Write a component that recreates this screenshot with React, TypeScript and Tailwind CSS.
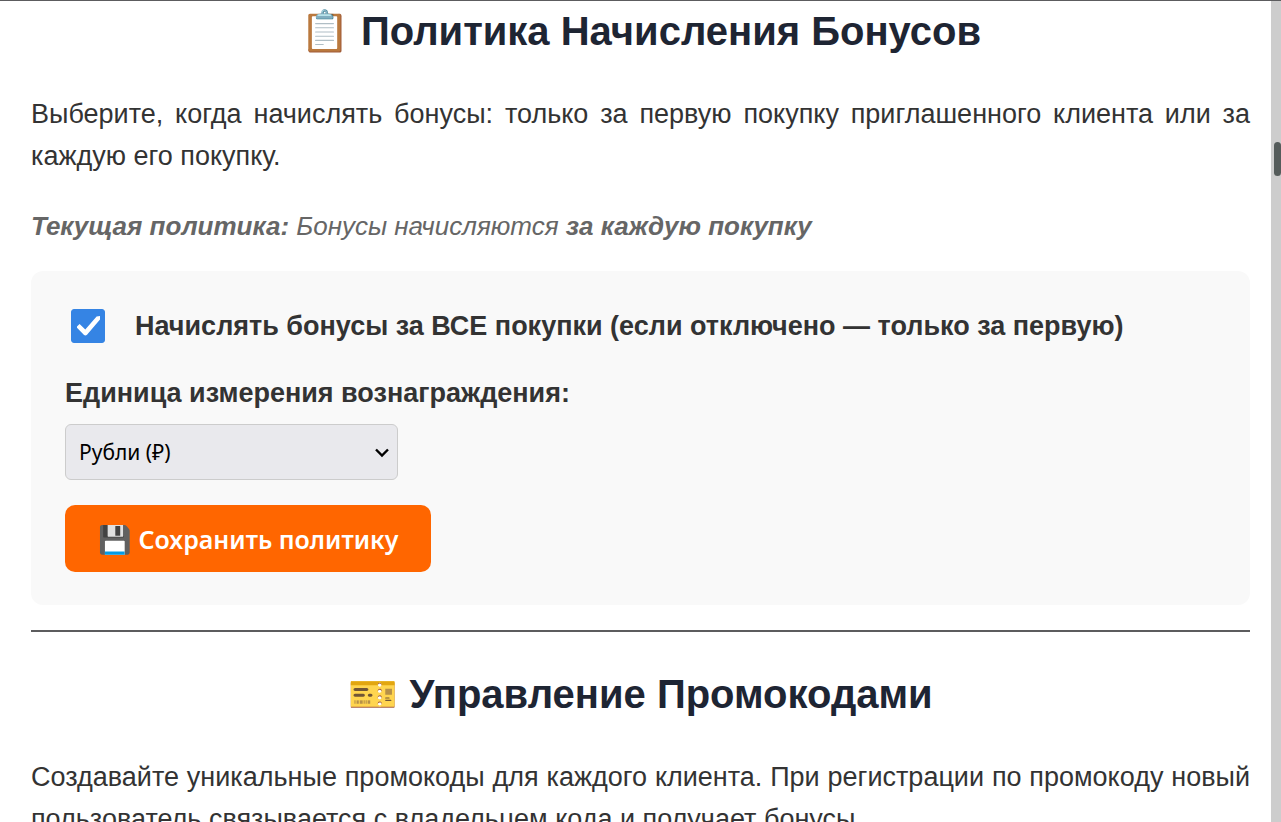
import React, { useState } from 'react';

interface SectionTitleProps {
  icon: string;
  children: React.ReactNode;
}

const SectionTitle: React.FC<SectionTitleProps> = ({ icon, children }) => (
  <h2 className="text-center text-[40px] leading-[60px] font-bold text-[#1e2533]">
    {icon} {children}
  </h2>
);

const App: React.FC = () => {
  const [allPurchases, setAllPurchases] = useState(true);
  const [unit, setUnit] = useState('rub');

  return (
    <div className="flex h-screen overflow-hidden border-t border-[#5c5c5e] bg-white font-['Liberation_Sans',Arial,sans-serif] text-[27px] leading-[42px] text-[#333333]">
      <main className="min-w-0 flex-1 pr-[21px] pl-[31px]">
        {/* Bonus policy */}
        <section>
          <SectionTitle icon="📋">Политика Начисления Бонусов</SectionTitle>
          <p className="mt-8 text-justify">
            Выберите, когда начислять бонусы: только за первую покупку приглашенного клиента или за
            каждую его покупку.
          </p>
          <p className="mt-7 text-[26px] text-[#666666] italic">
            <strong>Текущая политика:</strong> Бонусы начисляются <strong>за каждую покупку</strong>
          </p>

          <form
            className="mt-6 rounded-xl bg-[#f9f9f9] p-[34px] pb-[33px]"
            onSubmit={(e) => e.preventDefault()}
          >
            <label className="flex items-center gap-[30px] pl-1.5 font-bold">
              <span className="relative flex shrink-0">
                <input
                  type="checkbox"
                  checked={allPurchases}
                  onChange={(e) => setAllPurchases(e.target.checked)}
                  className="peer size-[34px] appearance-none rounded-[3px] border border-[#8f8f9d] bg-white checked:border-[#3584e4] checked:bg-[#3584e4]"
                />
                <svg
                  viewBox="0 0 34 34"
                  className="pointer-events-none absolute inset-0 hidden size-[34px] peer-checked:block"
                  fill="#ffffff"
                >
                  <path d="M6 17.6 L8.6 15 L14.3 20.4 L25.6 7.6 L29 7 V10.6 L16 25.8 Q14.4 27.4 12.8 25.8 L6 18.8 Z" />
                </svg>
              </span>
              Начислять бонусы за ВСЕ покупки (если отключено — только за первую)
            </label>

            <label htmlFor="unit" className="mt-[25px] block font-bold">
              Единица измерения вознаграждения:
            </label>
            <div className="relative mt-2.5 w-[333px]">
              <select
                id="unit"
                value={unit}
                onChange={(e) => setUnit(e.target.value)}
                className="block h-14 w-full appearance-none rounded-md border border-[#cccccc] bg-[#e9e9ed] px-[13px] font-['Noto_Sans',sans-serif] text-[21px] leading-[30px] text-black"
              >
                <option value="rub">Рубли (₽)</option>
                <option value="percent">Проценты (%)</option>
              </select>
              <svg
                viewBox="0 0 14 10"
                className="pointer-events-none absolute top-6 right-[9px] h-2.5 w-3.5"
                fill="none"
                stroke="#000000"
                strokeWidth="2.4"
              >
                <path d="M1 1.5 L7 7.5 L13 1.5" />
              </svg>
            </div>

            <button
              type="submit"
              className="mt-[25px] block h-[67px] rounded-[10px] bg-[#ff6600] px-[33px] font-['Noto_Sans',sans-serif] text-[25px] leading-[42px] font-semibold text-white"
            >
              <span className="text-[27px]">💾</span> Сохранить политику
            </button>
          </form>
        </section>

        <hr className="mt-[25px] border-t-2 border-[#5c5c5e]" />

        {/* Promo codes */}
        <section className="mt-8">
          <SectionTitle icon="🎫">Управление Промокодами</SectionTitle>
          <p className="mt-8 text-justify">
            Создавайте уникальные промокоды для каждого клиента. При регистрации по промокоду новый
            пользователь связывается с владельцем кода и получает бонусы.
          </p>
        </section>
      </main>

      {/* Scroll track */}
      <div className="flex w-2.5 shrink-0 justify-end bg-[#cdcdcd] pt-[141px]">
        <div className="h-[34px] w-[7px] rounded-full bg-[#555c5b]" />
      </div>
    </div>
  );
};

export default App;
